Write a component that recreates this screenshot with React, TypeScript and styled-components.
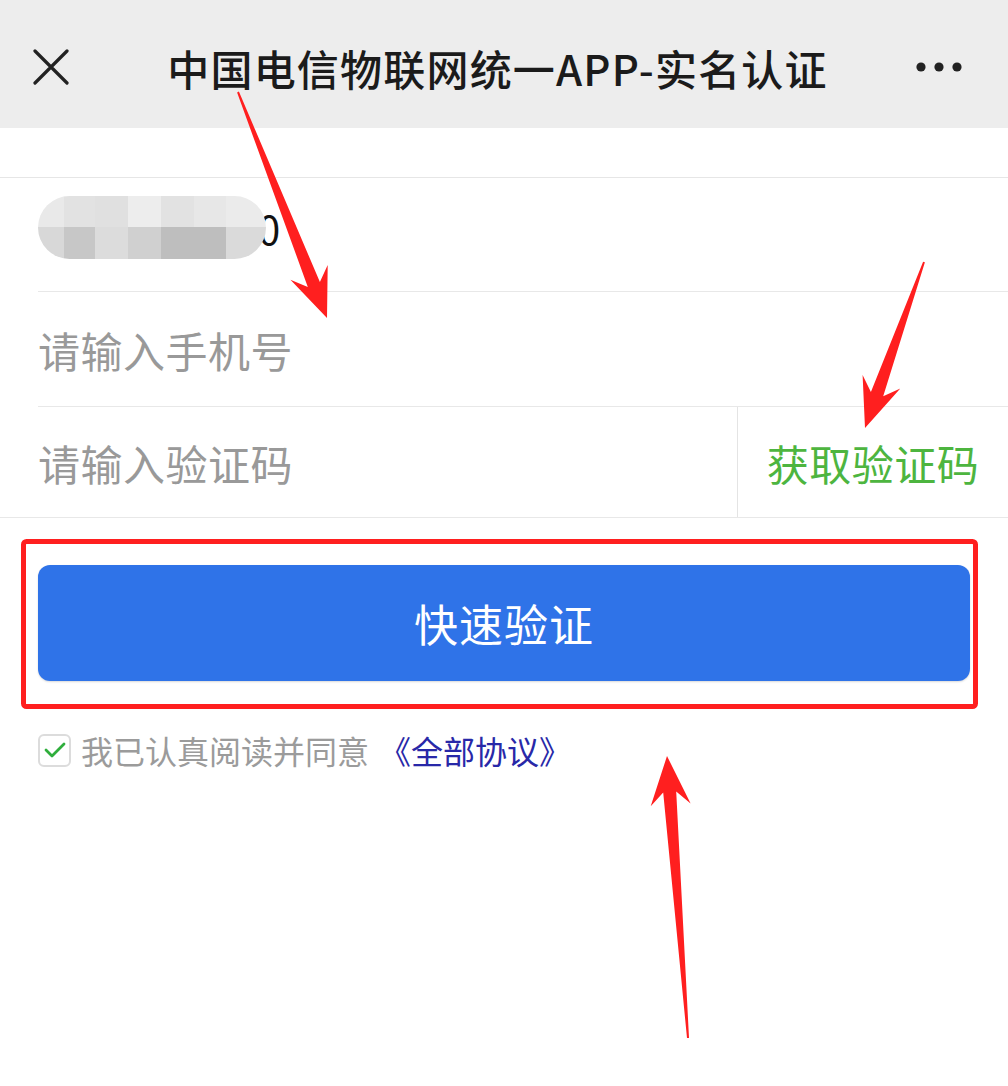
import React from 'react';
import styled, { createGlobalStyle } from 'styled-components';

const GlobalStyle = createGlobalStyle`
  html, body {
    margin: 0;
    padding: 0;
    background: #ffffff;
  }
  body {
    font-family: "Noto Sans CJK SC", "Noto Sans", sans-serif;
  }
`;

const Page = styled.div`
  position: relative;
  width: 1008px;
  height: 1086px;
  background: #ffffff;
  overflow: hidden;
`;

const Header = styled.header`
  height: 128px;
  box-sizing: border-box;
  padding: 6px 46px 0 33px;
  background: #ededed;
  display: grid;
  grid-template-columns: 1fr auto 1fr;
  align-items: center;
`;

const Title = styled.h1`
  margin: 0;
  font-size: 42px;
  font-weight: 500;
  color: #1b1b1b;
  letter-spacing: 1.2px;
  white-space: nowrap;
`;

const HeaderSide = styled.div<{ align: 'start' | 'end' }>`
  display: flex;
  justify-content: ${({ align }) => (align === 'start' ? 'flex-start' : 'flex-end')};
  align-items: center;
`;

const Spacer = styled.div`
  height: 49px;
  border-bottom: 1px solid #e6e6e6;
`;

const Row = styled.div<{ inset?: boolean; h: number }>`
  height: ${({ h }) => h}px;
  margin-left: ${({ inset }) => (inset ? '38px' : '0')};
  padding-left: ${({ inset }) => (inset ? '0' : '38px')};
  border-bottom: 1px solid #e8e8e8;
  display: flex;
  align-items: center;
`;

const Placeholder = styled.span`
  flex: 1;
  font-size: 42px;
  color: #999999;
  letter-spacing: 0.5px;
`;

const CodeButton = styled.div`
  align-self: stretch;
  width: 270px;
  border-left: 1px solid #e4e4e4;
  display: flex;
  align-items: center;
  justify-content: center;
  font-size: 42px;
  color: #4db53f;
  letter-spacing: 0.5px;
`;

const Mosaic = styled.div`
  position: relative;
  z-index: 1;
  margin-top: -14px;
  width: 228px;
  height: 63px;
  border-radius: 32px;
  overflow: hidden;
  display: grid;
  grid-template-columns: 26px 31px 33px 33px 33px 32px 40px;
  grid-template-rows: 31px 32px;
`;

const MosaicCell = styled.div<{ shade: string }>`
  background: ${({ shade }) => shade};
`;

const Digit = styled.span`
  margin-left: -8px;
  margin-top: -14px;
  font-size: 40px;
  color: #111111;
`;

const ActionArea = styled.div`
  padding: 47px 38px 0 38px;
`;

const SubmitButton = styled.button`
  width: 932px;
  height: 116px;
  border: none;
  border-radius: 12px;
  background: #2f73e8;
  color: #ffffff;
  font-family: inherit;
  font-size: 44px;
  letter-spacing: 1px;
  box-shadow: 0 1px 2px rgba(0, 0, 0, 0.15);
`;

const Agreement = styled.div`
  margin-top: 46px;
  padding-left: 38px;
  display: flex;
  align-items: center;
  gap: 10px;
  font-size: 32px;
  color: #9b9b9b;
`;

const CheckBox = styled.span`
  width: 29px;
  height: 29px;
  border: 2px solid #dcdcdc;
  border-radius: 6px;
  display: flex;
  align-items: center;
  justify-content: center;
  box-sizing: content-box;
`;

const AgreementLink = styled.span`
  color: #2828a8;
`;

const Overlay = styled.svg`
  position: absolute;
  left: 0;
  top: 0;
  pointer-events: none;
`;

const topShades = ['#e9e9e9', '#e2e2e2', '#e0e0e0', '#ededed', '#e2e2e2', '#e7e7e7', '#ebebeb'];
const bottomShades = ['#d8d8d8', '#c7c7c7', '#dcdcdc', '#d0d0d0', '#bebebe', '#bebebe', '#dadada'];

// tapered annotation arrow from tail to tip
function arrowPoints(tx: number, ty: number, px: number, py: number) {
  const len = Math.hypot(px - tx, py - ty);
  const dx = (px - tx) / len;
  const dy = (py - ty) / len;
  const nx = -dy;
  const ny = dx;
  const at = (along: number, side: number) =>
    `${(px - dx * along + nx * side).toFixed(1)},${(py - dy * along + ny * side).toFixed(1)}`;
  const headLen = 44;
  return [
    at(len, 1),
    at(headLen - 8, 6.5),
    at(headLen + 5, 20),
    at(0, 0),
    at(headLen + 5, -20),
    at(headLen - 8, -6.5),
    at(len, -1),
  ].join(' ');
}

const App: React.FC = () => {
  return (
    <>
      <GlobalStyle />
      <Page>
        <Header>
          <HeaderSide align="start">
            <svg width="36" height="36" viewBox="0 0 36 36">
              <path d="M2 2 L34 34 M34 2 L2 34" stroke="#222" strokeWidth="3.2" strokeLinecap="round" />
            </svg>
          </HeaderSide>
          <Title>中国电信物联网统一APP-实名认证</Title>
          <HeaderSide align="end">
            <svg width="46" height="10" viewBox="0 0 46 10">
              <circle cx="5" cy="5" r="4.6" fill="#222" />
              <circle cx="23" cy="5" r="4.6" fill="#222" />
              <circle cx="41" cy="5" r="4.6" fill="#222" />
            </svg>
          </HeaderSide>
        </Header>
        <Spacer />

        <Row inset h={113}>
          <Mosaic>
            {topShades.map((s, i) => (
              <MosaicCell key={'t' + i} shade={s} />
            ))}
            {bottomShades.map((s, i) => (
              <MosaicCell key={'b' + i} shade={s} />
            ))}
          </Mosaic>
          <Digit>0</Digit>
        </Row>
        <Row inset h={114}>
          <Placeholder>请输入手机号</Placeholder>
        </Row>
        <Row h={110}>
          <Placeholder>请输入验证码</Placeholder>
          <CodeButton>获取验证码</CodeButton>
        </Row>

        <ActionArea>
          <SubmitButton>快速验证</SubmitButton>
        </ActionArea>

        <Agreement>
          <CheckBox>
            <svg width="22" height="18" viewBox="0 0 22 18">
              <path d="M2 9 L8 15 L20 3" stroke="#2fae3c" strokeWidth="2.8" fill="none" strokeLinecap="round" strokeLinejoin="round" />
            </svg>
          </CheckBox>
          <span>我已认真阅读并同意</span>
          <AgreementLink>《全部协议》</AgreementLink>
        </Agreement>

        <Overlay width="1008" height="1086" viewBox="0 0 1008 1086">
          <rect x="23.5" y="541.5" width="952" height="165" rx="3" fill="none" stroke="#ff1f1f" strokeWidth="5" />
          <polygon points={arrowPoints(238, 92, 327, 318)} fill="#ff1f1f" />
          <polygon points={arrowPoints(924, 262, 865, 428)} fill="#ff1f1f" />
          <polygon points={arrowPoints(688, 1038, 667, 756)} fill="#ff1f1f" />
        </Overlay>
      </Page>
    </>
  );
};

export default App;
